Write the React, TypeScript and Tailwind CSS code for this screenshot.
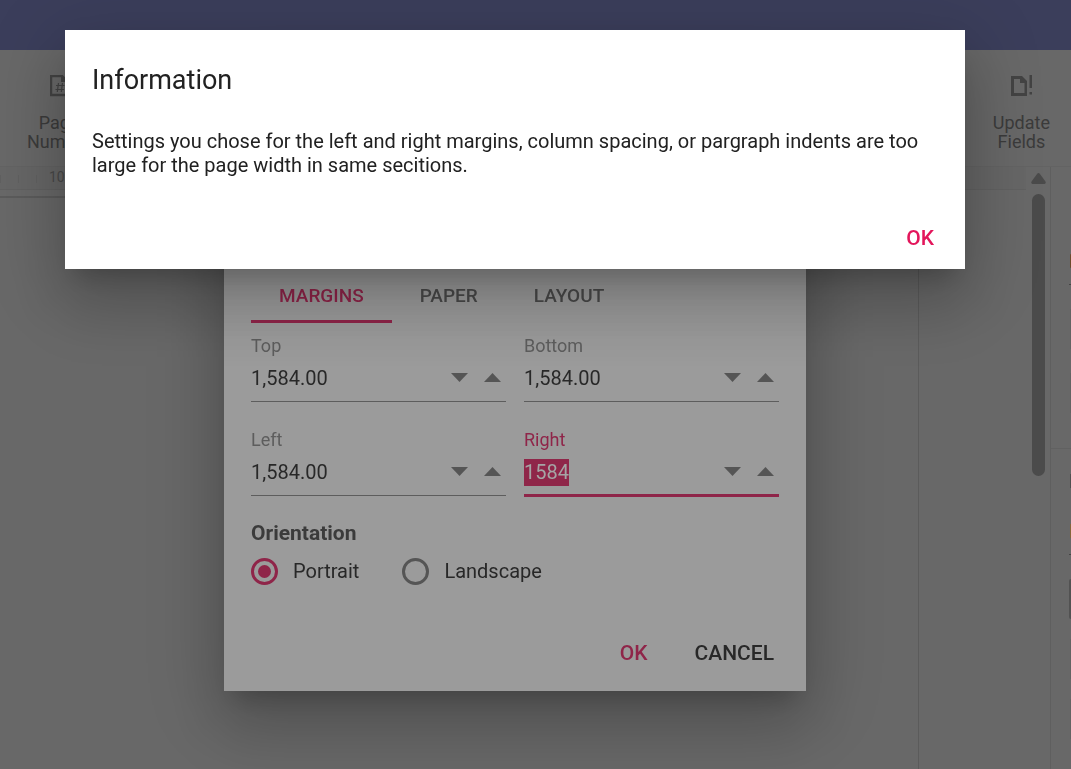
import { useEffect, useRef } from "react";
import type { ReactNode, RefObject } from "react";

const ELEVATION =
  "shadow-[0_17px_23px_-11px_rgba(0,0,0,0.2),0_36px_57px_5px_rgba(0,0,0,0.14),0_14px_69px_12px_rgba(0,0,0,0.12)]";

function ToolButton({ lines, icon }: { lines: string[]; icon: ReactNode }) {
  return (
    <button className="flex flex-col items-center gap-4 text-lg leading-[19px] text-[#3b3b3b]">
      {icon}
      <span className="text-center">
        {lines.map((line) => (
          <span key={line} className="block">
            {line}
          </span>
        ))}
      </span>
    </button>
  );
}

function PageNumberIcon() {
  return (
    <svg width="18" height="22" viewBox="0 0 18 22" fill="none" className="text-[#434343]">
      <path d="M1 1H12L17 6V20H1Z" stroke="currentColor" strokeWidth="2.500" />
      <path d="M11 1V7H17Z" fill="currentColor" />
      <path
        d="M8.500 8L7.300 17M12.500 8L11.300 17M6 10.500H14.500M5.500 14.500H14"
        stroke="currentColor"
        strokeWidth="1.200"
      />
    </svg>
  );
}

function UpdateFieldsIcon() {
  return (
    <svg width="21" height="22" viewBox="0 0 21 22" className="text-[#434343]">
      <path
        fillRule="evenodd"
        fill="currentColor"
        d="M0 1H11L16 6V21H0ZM3 4V18H13.500V8H9V4Z"
      />
      <path fill="currentColor" d="M18.500 0H21V13H18.500ZM18.500 17H21V19.500H18.500Z" />
    </svg>
  );
}

function Triangle({ up = false }: { up?: boolean }) {
  return (
    <svg width="17" height="9" viewBox="0 0 17 9" fill="currentColor">
      <path d={up ? "M0 9L8.500 0L17 9Z" : "M0 0H17L8.500 9Z"} />
    </svg>
  );
}

function NumberField({
  id,
  label,
  value,
  active = false,
  inputRef,
}: {
  id: string;
  label: string;
  value: string;
  active?: boolean;
  inputRef?: RefObject<HTMLInputElement | null>;
}) {
  return (
    <div className="flex min-w-0 flex-col">
      <label
        htmlFor={id}
        className={`text-lg leading-6 ${active ? "text-[#8f2549]" : "text-[#5d5d5d]"}`}
      >
        {label}
      </label>
      <div
        className={`flex items-start pt-[7px] ${
          active ? "h-[45px] border-b-3 border-[#8f2549]" : "h-11 border-b border-[#5d5d5d]"
        }`}
      >
        <input
          id={id}
          ref={inputRef}
          defaultValue={value}
          className="h-[27px] min-w-0 flex-1 bg-transparent text-xl leading-[27px] text-[#282828] outline-none selection:bg-[#8f2549fd] selection:text-[#a5a5a5]"
        />
        <div className="flex gap-4 pt-2 pr-[5px] text-[#555555]">
          <button aria-label={`Decrease ${label}`}>
            <Triangle />
          </button>
          <button aria-label={`Increase ${label}`}>
            <Triangle up />
          </button>
        </div>
      </div>
    </div>
  );
}

function Orientation({ label, checked = false }: { label: string; checked?: boolean }) {
  return (
    <label className="flex items-center gap-[15px] text-xl leading-7 text-[#282828]">
      <input
        type="radio"
        name="orientation"
        defaultChecked={checked}
        className="grid size-[27px] appearance-none place-items-center rounded-full border-3 border-[#555555] checked:border-[#8f2549] checked:before:size-[13px] checked:before:rounded-full checked:before:bg-[#8f2549]"
      />
      {label}
    </label>
  );
}

function SidePanel() {
  return (
    <aside className="w-[21px] shrink-0 overflow-hidden border-l border-[#5f5f5f] pt-[87px]">
      <div className="flex flex-col items-end">
        <div className="h-3.5 w-px rounded-l bg-[#6b4a2c]" />
        <div className="mt-4 h-px w-0.5 bg-[#444444]" />
        <div className="mt-6 h-10 w-px bg-[#636363]" />
        <div className="mt-6 h-10 w-px bg-[#636363]" />
        <div className="mt-[35px] h-px w-full bg-[#616161]" />
        <div className="mt-[25px] h-3.5 w-px bg-[#505050]" />
        <div className="mt-9 h-3.5 w-px bg-[#84653b]" />
        <div className="mt-4 h-px w-0.5 bg-[#444444]" />
        <div className="mt-6 h-10 w-0.5 rounded-l bg-[#525252]" />
        <div className="mt-5 h-10 w-px bg-[#636363]" />
        <div className="mt-5 h-10 w-px bg-[#636363]" />
      </div>
    </aside>
  );
}

function Editor() {
  return (
    <div className="flex min-h-screen flex-col bg-[#686868]">
      <header className="h-[50px] bg-[#3b3e5b]" />
      <div className="flex h-[117px] items-start justify-between border-b border-[#636363] pt-[25px] pr-[21px] pl-[27px]">
        <ToolButton lines={["Page", "Number"]} icon={<PageNumberIcon />} />
        <ToolButton lines={["Update", "Fields"]} icon={<UpdateFieldsIcon />} />
      </div>
      <div className="flex flex-1">
        <main className="flex flex-1 flex-col">
          <div className="flex h-[23px] shrink-0 items-start border-b border-[#616161] bg-[#666666] pt-0.5 text-sm leading-4 text-[#494949]">
            <div className="flex gap-[17px] pt-1.5">
              <span className="h-2 w-px bg-[#606060]" />
              <span className="h-2 w-px bg-[#606060]" />
              <span className="h-2 w-px bg-[#606060]" />
            </div>
            <span className="pl-3">1080</span>
          </div>
          <div className="mt-1.5 mr-[107px] flex-1 border-t-2 border-r border-[#5b5b5b]" />
        </main>
        <div className="flex w-6 shrink-0 flex-col items-center pt-1.5 text-[#4b4b4b]">
          <svg width="15" height="11" viewBox="0 0 15 11" fill="currentColor">
            <path d="M6.200 .8Q7.500-.7 8.800 .8L14.300 8.200Q15.500 10.500 13.500 11H1.500Q-.5 10.500 .7 8.200Z" />
          </svg>
          <div className="mt-2.5 h-[282px] w-[13px] rounded-full bg-current" />
        </div>
        <SidePanel />
      </div>
    </div>
  );
}

function MarginsDialog() {
  const right = useRef<HTMLInputElement>(null);

  useEffect(() => {
    right.current?.focus();
    right.current?.select();
  }, []);

  return (
    <div className="fixed inset-0 flex items-start justify-center pt-[78px] pr-[41px]">
      <section
        role="dialog"
        aria-label="Margins"
        className={`w-[582px] max-w-full bg-[#9b9b9b] px-[27px] pt-[191px] pb-[18px] ${ELEVATION}`}
      >
        <div role="tablist" className="flex text-[19px] leading-6 font-medium text-[#4a4a4a]">
          <button
            role="tab"
            aria-selected="true"
            className="h-[54px] border-b-3 border-[#8f2549] px-7 pt-0.5 text-[#8f2549]"
          >
            MARGINS
          </button>
          <button role="tab" aria-selected="false" className="h-[54px] border-b-3 border-transparent px-7 pt-0.5">
            PAPER
          </button>
          <button role="tab" aria-selected="false" className="h-[54px] border-b-3 border-transparent px-7 pt-0.5">
            LAYOUT
          </button>
        </div>
        <div className="grid grid-cols-2 gap-x-[18px] gap-y-[26px] pt-[11px]">
          <NumberField id="top" label="Top" value="1,584.00" />
          <NumberField id="bottom" label="Bottom" value="1,584.00" />
          <NumberField id="left" label="Left" value="1,584.00" />
          <NumberField id="right" label="Right" value="1584" active inputRef={right} />
        </div>
        <h3 className="pt-6 text-[21px] leading-6 font-bold text-[#3b3b3b]">Orientation</h3>
        <div className="flex gap-[43px] pt-3">
          <Orientation label="Portrait" checked />
          <Orientation label="Landscape" />
        </div>
        <div className="flex justify-end gap-[29px] pt-12 text-[21px] leading-6 font-medium">
          <button className="h-10 px-[9px] text-[#8f2549]">OK</button>
          <button className="-mr-1 h-10 px-[9px] text-[#282828]">CANCEL</button>
        </div>
      </section>
    </div>
  );
}

function InformationDialog() {
  return (
    <div className="fixed inset-0 flex items-start pt-[30px] pr-[106px] pl-[65px]">
      <section
        role="alertdialog"
        aria-labelledby="info-title"
        className={`flex-1 bg-white px-[27px] pt-8 pb-[11px] text-[#212121] ${ELEVATION}`}
      >
        <h2 id="info-title" className="text-[27px] leading-9">
          Information
        </h2>
        <p className="pt-[31px] text-xl leading-6">
          Settings you chose for the left and right margins, column spacing, or pargraph indents are too large for
          the page width in same secitions.
        </p>
        <div className="flex justify-end pt-[41px] text-[21px] leading-6 font-medium text-[#e3165b]">
          <button className="h-10 px-1">OK</button>
        </div>
      </section>
    </div>
  );
}

export default function App() {
  return (
    <div className="font-[Roboto,sans-serif]">
      <Editor />
      <MarginsDialog />
      <InformationDialog />
    </div>
  );
}
